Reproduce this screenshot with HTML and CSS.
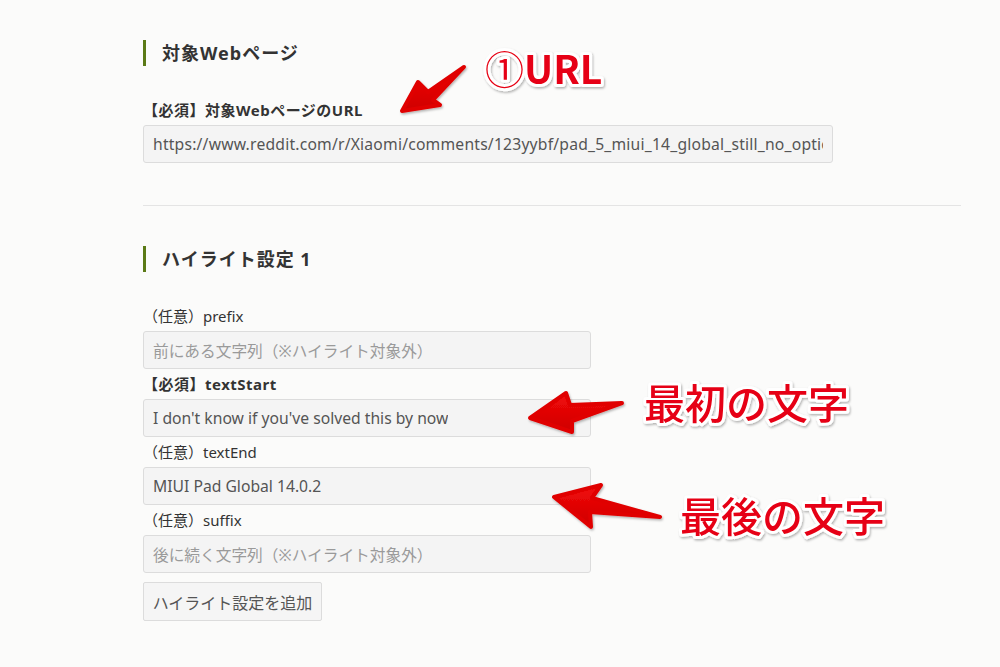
FILE: index.html
```html
<!DOCTYPE html>
<html lang="ja">
<head>
<meta charset="utf-8">
<title>ハイライト設定</title>
<link rel="stylesheet" href="styles.css">
</head>
<body>
<main class="page">
  <section class="section">
    <h2 class="heading">対象Webページ</h2>
    <div class="label bold">【必須】対象WebページのURL</div>
    <div class="field field-wide"><span class="field-text">https://www.reddit.com/r/Xiaomi/comments/123yybf/pad_5_miui_14_global_still_no_option</span></div>
  </section>
  <hr class="divider">
  <section class="section">
    <h2 class="heading">ハイライト設定 1</h2>
    <div class="label">（任意）prefix</div>
    <div class="field"><span class="field-text placeholder">前にある文字列（※ハイライト対象外）</span></div>
    <div class="label bold">【必須】textStart</div>
    <div class="field"><span class="field-text">I don't know if you've solved this by now</span></div>
    <div class="label">（任意）textEnd</div>
    <div class="field"><span class="field-text">MIUI Pad Global 14.0.2</span></div>
    <div class="label">（任意）suffix</div>
    <div class="field"><span class="field-text placeholder">後に続く文字列（※ハイライト対象外）</span></div>
    <div class="button">ハイライト設定を追加</div>
  </section>
</main>

<svg class="overlay" width="1000" height="667" viewBox="0 0 1000 667" xmlns="http://www.w3.org/2000/svg">
  <defs>
    <linearGradient id="red" x1="0" y1="0" x2="0" y2="1">
      <stop offset="0" stop-color="#f20a0a"/>
      <stop offset="1" stop-color="#cf0000"/>
    </linearGradient>
    <filter id="sh" x="-20%" y="-20%" width="140%" height="140%">
      <feDropShadow dx="1" dy="1.5" stdDeviation="1" flood-color="#000" flood-opacity="0.3"/>
    </filter>
  </defs>
  <g class="arrow" filter="url(#sh)">
    <polygon points="402,111 418,82 428,92 464,67 433,100 440,105"/>
    <polygon points="530,418 566,393 570,405 622,403 572,421 572,432"/>
    <polygon points="554,497 601,485 592,498 660,517 590,512 591,527"/>
  </g>
  <g class="note" filter="url(#sh)">
    <text x="485" y="84" class="note-bold"><tspan class="circled">①</tspan>URL</text>
    <text x="644" y="419">最初の文字</text>
    <text x="680" y="532">最後の文字</text>
  </g>
</svg>
</body>
</html>
```

FILE: styles.css
```css
html, body {
  margin: 0;
  padding: 0;
}
body {
  background: #fbfbfa;
  font-family: "Noto Sans", "Noto Sans CJK JP", sans-serif;
  color: #333;
  font-size: 15px;
  width: 1000px;
  height: 667px;
  overflow: hidden;
  position: relative;
}
.page {
  margin-left: 143px;
  width: 818px;
  padding-top: 40px;
}
.section {
  display: flex;
  flex-direction: column;
  align-items: flex-start;
}
.heading {
  margin: 0 0 29px 0;
  border-left: 3px solid #5b7a16;
  padding-left: 16px;
  height: 26px;
  line-height: 26px;
  font-size: 18px;
  letter-spacing: 1px;
  font-weight: bold;
  color: #333;
}
.label {
  height: 30px;
  line-height: 30px;
  white-space: nowrap;
}
.bold {
  font-weight: bold;
  letter-spacing: 0.5px;
}
.field {
  box-sizing: border-box;
  width: 448px;
  height: 38px;
  border: 1px solid #dcdcdc;
  border-radius: 3px;
  background: #f4f4f4;
  padding: 0 9px;
  display: flex;
  align-items: center;
  overflow: hidden;
  white-space: nowrap;
  font-size: 15.7px;
}
.field-wide {
  width: 690px;
  letter-spacing: 0.2px;
}
.field-text {
  color: #555;
  overflow: hidden;
}
.placeholder {
  color: #9a9a9a;
}
.divider {
  border: 0;
  border-top: 1px solid #e4e4e4;
  margin: 42px 0 40px 0;
  width: 818px;
}
.button {
  box-sizing: border-box;
  margin-top: 9px;
  height: 39px;
  width: 179px;
  border: 1px solid #dcdcdc;
  border-radius: 2px;
  background: #f5f5f5;
  color: #555;
  font-size: 16px;
  display: flex;
  align-items: center;
  justify-content: center;
  white-space: nowrap;
}
.overlay {
  position: absolute;
  left: 0;
  top: 0;
}
.arrow polygon {
  fill: url(#red);
  stroke: #e00606;
  stroke-width: 4;
  stroke-linejoin: round;
}
.note text {
  font-family: "Noto Sans CJK JP", sans-serif;
  font-size: 41px;
  font-weight: 500;
  fill: #e60012;
  stroke: #ffffff;
  stroke-width: 6px;
  stroke-linejoin: round;
  paint-order: stroke fill;
}
.note .note-bold {
  font-size: 39px;
  font-weight: 700;
}
.note .circled {
  font-weight: 400;
}
```
